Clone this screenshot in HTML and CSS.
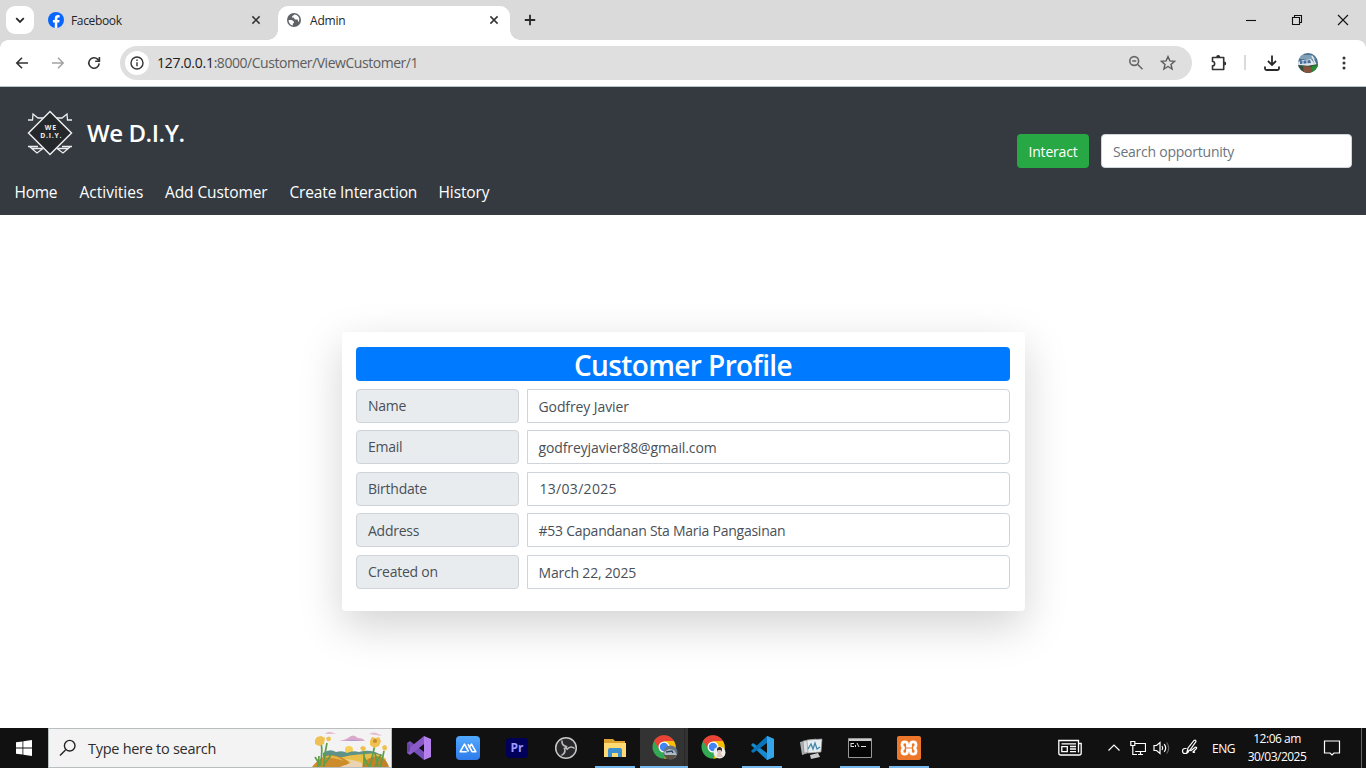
FILE: index.html
```html
<!DOCTYPE html>
<html lang="en">
<head>
<meta charset="utf-8">
<title>Admin</title>
<link rel="stylesheet" href="styles.css">
</head>
<body>
<div class="screen">
  <header class="tabstrip">
    <button class="tab-search"><svg width="10" height="10" viewBox="0 0 10 10"><path d="M1.2 3.2 5 7l3.800-3.800" class="stroke2"/></svg></button>
    <div class="tab tab-idle">
      <svg width="16" height="16" viewBox="0 0 16 16"><circle cx="8" cy="8" r="8" fill="#0866ff"/><path d="M6.800 16v-5.400H4.900V8h1.900V6.700c0-2.600 1.200-3.700 3.500-3.700.5 0 1 .1 1.300.2v2.200h-.9c-1.100 0-1.400.5-1.400 1.500V8h2.300l-.4 2.600H9.300V16z" fill="#fff"/></svg>
      <span class="tab-title t-fb">Facebook</span>
      <svg class="tab-close" width="10" height="10" viewBox="0 0 10 10"><path d="M1.400 1.400l7.200 7.200M8.600 1.400L1.400 8.600" class="stroke-close"/></svg>
    </div>
    <div class="tab tab-active">
      <svg width="16" height="16" viewBox="0 0 16 16"><circle cx="8" cy="8" r="7" fill="#5f6368"/><path d="M2.500 8.200c2.200-.4 4 .1 5.200 1.200.6.700.2 1.700-.7 2-.4.700 0 1.300-.2 2.100-2.400-.5-4.200-2.700-4.300-5.300zM8.200 2.500c-.2 1.300-1.900.9-2.100 2.200-.1.900 1 1.200 1.700.7.700.7.200 1.600 1.200 2 1.200.4 2-.4 2.600.4.600.8.100 1.700 1.100 2.200 1.800-3.900-.4-7.200-4.500-7.500z" fill="#fff"/></svg>
      <span class="tab-title t-admin">Admin</span>
      <svg class="tab-close" width="10" height="10" viewBox="0 0 10 10"><path d="M1.400 1.400l7.200 7.200M8.600 1.400L1.400 8.600" class="stroke-close"/></svg>
    </div>
    <svg class="new-tab" width="12" height="12" viewBox="0 0 12 12"><path d="M6 .8v10.400M.8 6h10.400" class="stroke2"/></svg>
    <div class="window-buttons">
      <svg width="12" height="12" viewBox="0 0 12 12"><path d="M1 6.500h10" class="stroke1"/></svg>
      <svg width="12" height="12" viewBox="0 0 12 12"><path d="M1.500 3.500h7v7h-7zM3.500 3.500v-2h7v7h-2" class="stroke1"/></svg>
      <svg width="12" height="12" viewBox="0 0 12 12"><path d="M1 1l10 10M11 1L1 11" class="stroke1"/></svg>
    </div>
  </header>

  <div class="toolbar">
    <svg width="16" height="16" viewBox="0 0 16 16"><path d="M14 8H3.200M8 2.800L2.800 8 8 13.200" class="stroke-nav"/></svg>
    <svg class="nav-forward" width="16" height="16" viewBox="0 0 16 16"><path d="M2 8h10.800M8 2.800L13.200 8 8 13.200"/></svg>
    <svg class="nav-reload" width="16" height="16" viewBox="0 0 16 16"><path d="M13.200 8.400A5.200 5.200 0 1 1 11.600 4.200L13.500 6" class="stroke-nav"/><path d="M13.400 2V6.300H9.200" class="stroke-nav"/></svg>
    <div class="omnibox">
      <span class="site-info"><svg width="14" height="14" viewBox="0 0 14 14"><circle cx="7" cy="7" r="6" fill="none" stroke="#333" stroke-width="1.400"/><path d="M7 6.200v4M7 3.600v1.400" stroke="#333" stroke-width="1.400"/></svg></span>
      <span class="url"><b>127.0.0.1</b>:8000/Customer/ViewCustomer/1</span>
      <svg class="zoom-icon" width="16" height="16" viewBox="0 0 16 16"><g fill="none" stroke="#666" stroke-width="1.600"><circle cx="6.200" cy="6" r="4.400"/><path d="M9.500 9.300l5 5M4.200 6h4"/></g></svg>
      <svg class="star-icon" width="16" height="16" viewBox="0 0 16 16"><path d="M8 1.600l1.900 4.300 4.700.4-3.600 3.100 1.100 4.600L8 11.500 3.900 14 5 9.400 1.400 6.300l4.700-.4z" fill="none" stroke="#5c5c5c" stroke-width="1.400"/></svg>
    </div>
    <svg class="ext-icon" width="18" height="18" viewBox="0 0 18 18"><path d="M2.500 3.500H13.700V15.500H2.500v-3.700a2.100 2.100 0 0 0 0-4.300z" class="stroke-nav" stroke-linejoin="round"/><path d="M6.200 3a2 2 0 0 1 4 0zM14.200 7.500a2 2 0 0 1 0 4z" fill="#292929"/></svg>
    <span class="divider"></span>
    <svg class="dl-icon" width="18" height="18" viewBox="0 0 18 18"><path d="M9 1.500v9M5 7l4 4 4-4M2 12.500v2q0 1.500 1.500 1.500h11q1.500 0 1.500-1.500v-2" class="stroke2"/></svg>
    <svg class="avatar" width="20" height="20" viewBox="0 0 20 20"><defs><clipPath id="av"><circle cx="10" cy="10" r="10"/></clipPath></defs><g clip-path="url(#av)"><path fill="#4b6f92" d="M0 0h20v20H0z"/><path fill="#7fa1b8" d="M3 2h11l4 4H1z"/><path fill="#dfe5ea" d="M0 9l5-2 8-1 5 6-6 1-12-1z"/><path d="M2 8l10-1 1 3-11 1z" fill="#466f9f"/><path d="M5 7v4m4-4v4" stroke="#dbe4ec"/><path d="M14 3l4 9" stroke="#e6ebee" stroke-width="1.500"/><path fill="#36503a" d="M0 12l9 1 11-2v9H0z"/><path fill="#86513d" d="M5 13l9 1-1 6H6z"/><path fill="#288c36" d="M14 13l6-1v8h-7z"/></g></svg>
    <svg class="menu-icon" width="4" height="14" viewBox="0 0 4 14" fill="#333"><circle cx="2" cy="2" r="1.500"/><circle cx="2" cy="7" r="1.500"/><circle cx="2" cy="12" r="1.500"/></svg>
  </div>

  <nav class="site-nav">
    <div class="nav-main">
      <svg class="logo" width="46" height="48" viewBox="0 0 46 48"><g fill="none" stroke="#eceeef" stroke-width="1.300"><path d="M1 10h4.500L6 4l5 4h7M45 10h-4.500L40 4l-5 4h-7M1 36.500h10M45 36.500H35M3 37l7 6 8-6M5 38.500h10M43 37l-7 6-8-6M41 38.500H31"/><path fill="#25282b" stroke-width="1.500" d="M23 1.500l21.500 21.500L23 44.500 1.500 23z"/></g><text x="23.800" y="20" class="logo-text">WE</text><text x="24.300" y="28" class="logo-text">D.I.Y.</text></svg>
      <span class="brand">We D.I.Y.</span>
      <button class="interact">Interact</button>
      <div class="search-input"><span>Search opportunity</span></div>
    </div>
    <div class="links">
      <a class="l1">Home</a><a class="l2">Activities</a><a class="l3">Add Customer</a><a class="l4">Create Interaction</a><a class="l5">History</a>
    </div>
  </nav>

  <main class="content">
    <section class="card">
      <h1><span>Customer Profile</span></h1>
      <div class="row"><div class="label">Name</div><div class="field f-name">Godfrey Javier</div></div>
      <div class="row"><div class="label">Email</div><div class="field f-mail">godfreyjavier88@gmail.com</div></div>
      <div class="row"><div class="label">Birthdate</div><div class="field f-date">13/03/2025</div></div>
      <div class="row"><div class="label low">Address</div><div class="field f-addr">#53 Capandanan Sta Maria Pangasinan</div></div>
      <div class="row"><div class="label">Created on</div><div class="field f-created">March 22, 2025</div></div>
    </section>
  </main>

  <footer class="taskbar">
    <div class="start"><svg width="16" height="16" viewBox="0 0 16 16" fill="#fff"><path d="M0 2.300L6.500 1.400v6.200H0zM7.300 1.300L16 0v7.600H7.300zM0 8.400h6.500v6.200L0 13.700zM7.300 8.400H16V16l-8.700-1.300z"/></svg></div>
    <div class="task-search">
      <svg width="18" height="18" viewBox="0 0 18 18"><path d="M6.500 11L1 16.500" class="stroke-search"/><circle cx="10.700" cy="6.700" r="5.300" class="stroke-search"/></svg>
      <span class="task-text">Type here to search</span>
      <svg class="scene" width="80" height="38" viewBox="0 0 80 38">
        <path d="M14 5q3-3 6-2l5 2zM58 5q5-4 13 2z" fill="#e5bdcf"/><path d="M28 12q6-1 9-3 5-5 10 0 5 0 7 3z" fill="#dba9c9"/><path d="M34 12q6-3 17 0z" fill="#b79dd3"/>
        <circle cx="38" cy="21" r="4" fill="#f7cf55"/><path d="M12 24q7-5 13-1 7-2 11 1 6-3 12-1 12-4 24 4v11H12z" fill="#5e9188"/><path d="M20 31q20-6 35-6 12-2 20 5v8H20z" fill="#eabf48"/><path d="M1 38q9-12 20-12 15 2 20 12z" fill="#cc8c2c"/><path d="M13 28q10-4 20 4-8-3-20-4z" fill="#e8b749"/><path d="M50 38q4-9 16-11 9 1 12 11z" fill="#c48228"/><path d="M29 38c12-4 14-5 5-8 16 2 19 4 17 8z" fill="#ead3b3"/>
        <path d="M9 37q3-14 1-23m3 24q0-12 3-24m-7 22L4 28m8 9l8-11M59 38q3-13 5-23m-6 23l-5-10m11 10l6-13m-1 13q3-10 4-16M67 38l-3-14M53 37V22M7 38l1-11" fill="none" stroke="#5f9d49" stroke-width="1.700"/>
        <path d="M4 11l2-3 4-1 4 2-1 6-5 2-4-2zM15 9q3-3 5 0 0 4-4 3zM59 12l2-4 4 1 3-1 2 4-2 5-5 2-4-3zM49 19q3-4 6 0-1 4-4 3zM71 18q3-4 5 0 0 5-4 3z" fill="#efc052"/><circle cx="64" cy="12" r="2" fill="#c78b2d"/>
      </svg>
    </div>
    <div class="apps">
      <div class="app"><svg width="24" height="24" viewBox="0 0 24 24"><path d="M0 7l3-2 14 11V24L1 11z" fill="#7650b8"/><path d="M0 17l3 2L17 8V0L1 13z" fill="#8a5ac8"/><path d="M17 0l7 3v18l-7 3z" fill="#b681ed"/><path d="M0 7v10l3-2V9z" fill="#66439e"/></svg></div>
      <div class="app"><svg width="24" height="24" viewBox="0 0 24 24"><defs><linearGradient id="mb" x2="0" y2="1"><stop stop-color="#51a9ff"/><stop offset="1" stop-color="#2f7bea"/></linearGradient></defs><rect width="24" height="24" rx="4" fill="url(#mb)"/><path d="M10.800 15.700H4.200L8.500 8.200l4 7.500M12 8.200l4 7.500h3.800L15.500 8.200l-2.500 4" fill="none" stroke="#fff" stroke-width="1.600" stroke-linejoin="round"/></svg></div>
      <div class="app"><span class="premiere">Pr</span></div>
      <div class="app"><svg width="24" height="24" viewBox="0 0 24 24"><circle cx="12" cy="12" r="10.300" fill="#29292c" stroke="#c8c8c8" stroke-width="1.500"/><path id="blade" d="M8 4.500C7.500 8.500 10 10 12.500 10.500L12 12.500" fill="none" stroke="#bcbdbf" stroke-width="1.600"/><use href="#blade" transform="rotate(120 12 12)"/><use href="#blade" transform="rotate(240 12 12)"/></svg></div>
      <div class="app running"><svg width="24" height="24" viewBox="0 0 24 24"><path d="M1 3h9l2 2h10v16H1z" fill="#dda331"/><path d="M1 7h22v14H1z" fill="#ffda73"/><path d="M5 21v-7q0-2 2-2h10q2 0 2 2v7h-4v-4H9v4z" fill="#3b90d0"/></svg></div>
      <div class="app running active"><svg class="chrome" width="26" height="26" viewBox="0 0 26 26"><circle cx="12" cy="12" r="11.500" fill="#34a853"/><path d="M2 6a11.500 11.500 0 0 1 20 0H12L8 15z" fill="#ea4335"/><path d="M12 6h10a11.500 11.500 0 0 1-10 17.500L18 15z" fill="#fbbc04"/><circle cx="12" cy="12" r="5.500" fill="#fff"/><circle cx="12" cy="12" r="4.200" fill="#4285f4"/><circle cx="18.500" cy="17.500" r="7" fill="#647485"/><path d="M12 17l5-3 5 1 3 5H13z" fill="#aebac6"/><path d="M12 20h12l-3 4h-6z" fill="#5c5043"/><path d="M14 17l6-1 1 2" fill="none" stroke="#2e465c" stroke-width="1.500"/></svg></div>
      <div class="app"><svg class="chrome" width="26" height="26" viewBox="0 0 26 26"><circle cx="12" cy="12" r="11.500" fill="#34a853"/><path d="M2 6a11.500 11.500 0 0 1 20 0H12L8 15z" fill="#ea4335"/><path d="M12 6h10a11.500 11.500 0 0 1-10 17.500L18 15z" fill="#fbbc04"/><circle cx="12" cy="12" r="5.500" fill="#fff"/><circle cx="12" cy="12" r="4.200" fill="#4285f4"/><circle cx="18.500" cy="17.500" r="6" fill="#eee"/><circle cx="18.500" cy="14.500" r="2.500" fill="#332b28"/><path d="M17 15h3v3l2 4h-6z" fill="#dac5bb"/></svg></div>
      <div class="app running"><svg width="24" height="24" viewBox="0 0 24 24"><path d="M17 0l7 3v18l-7 3L1 9l2-2 14 10z" fill="#178bd0"/><path d="M1 15l2 2L17 7V0z" fill="#0875bb"/><path d="M17 0l7 3v18l-7 3z" fill="#35a5eb"/></svg></div>
      <div class="app"><svg width="24" height="24" viewBox="0 0 24 24"><path d="M1 6l8-2v13l-6 2z" fill="#a9afb2"/><path d="M4 5l13-2v13L5 17z" fill="#d9dddf" stroke="#888" stroke-width=".7"/><path d="M8 4l15-1-1 13-13 1z" fill="#e8edf0" stroke="#999" stroke-width=".7"/><path d="M9 13l3-5 2 5 2-6 2 6 3-2" fill="none" stroke="#4387ac" stroke-width="1.300"/><path d="M11 19l8-2 2 4-9 2z" fill="#c8cbcd"/></svg></div>
      <div class="app running"><svg width="24" height="22" viewBox="0 0 24 22"><path d="M.5 1.500h23v19H.5z" fill="#050505" stroke="#989898"/><path d="M1 2h22v2H1z" fill="#ccc"/><path d="M3 6.500h3M3 6v4M3 9.500h3M7.500 8v2M9 6l2 4M13 9.500h5" stroke="#ddd"/></svg></div>
      <div class="app running"><svg width="24" height="24" viewBox="0 0 24 24"><rect width="24" height="24" rx="2" fill="#ed762b"/><path d="M7.500 12C5.300 11.500 5 10.300 5 8.700 5 6.800 6 5.800 7.800 5.800S10.500 7 10.500 8.500V10h3V8.500c0-1.500.9-2.700 2.700-2.700S19 6.800 19 8.700s-.5 2.800-2.500 3.300c2 .5 2.500 1.700 2.500 3.300 0 1.900-1 2.900-2.800 2.900s-2.700-1.200-2.700-2.700V14h-3v1.500c0 1.500-.9 2.700-2.700 2.700S5 17.200 5 15.300s.5-2.800 2.500-3.300z" fill="none" stroke="#fff" stroke-width="2.800"/></svg></div>
    </div>
    <div class="tray">
      <svg class="news" width="24" height="18" viewBox="0 0 24 18"><g fill="none" stroke="#fff" stroke-width="1.300"><path d="M20.500 13.500V1.500H.8V14q0 2 2 2h18.400q2 0 2-2V4.500h-2.700v9"/><path d="M3.500 4.800h14.500M3.800 7.600h5.500v5H3.800zM12 7.500h6M12 10h6M12 12.600h6"/></g></svg>
      <svg class="chev" width="14" height="14" viewBox="0 0 14 14"><path d="M1.500 9.500L7 4l5.500 5.500" class="tray-line"/></svg>
      <svg class="net" width="16" height="16" viewBox="0 0 16 16"><path d="M5 3.500h10.500v8H5.200M8 14.500h5M10.500 11.500v3M.8 1.500h4v4h-4zM2.800 5.500v9H7" class="tray-line"/></svg>
      <svg class="sound" width="18" height="16" viewBox="0 0 18 16"><path d="M1 5.500h2.500L7 2.500v11l-3.500-3H1zM9 6q1.500 2 0 4M11.200 4.200q3 3.800 0 7.600" class="tray-line"/><path d="M13.700 2.500q4 5.500 0 11" class="tray-line dim"/></svg>
      <svg class="pen" width="18" height="18" viewBox="0 0 18 18"><path d="M6 13l1-4 6-7.500q2-1 2 1L9 11zM5.500 9.500H4q-2.500 0-2.500 2.500T4 14.500q3 0 4-3M9.500 12l5-4q1.500 0 1 1.500L12 13q0 1 2 0" class="tray-line"/></svg>
      <span class="lang">ENG</span>
      <div class="clock"><span class="time">12:06 am</span><span class="date">30/03/2025</span></div>
      <svg class="notif" width="18" height="18" viewBox="0 0 18 18"><path d="M1.500 2h15v12H11l-2 2-2-2H1.500z" class="tray-line"/></svg>
      <span class="show-desktop"></span>
    </div>
  </footer>
</div>
</body>
</html>
```
FILE: styles.css
```css
* { box-sizing: border-box; }
body { margin: 0; font-family: "Open Sans", "Noto Sans", sans-serif; color: #212529; }
svg { display: block; flex: none; }
button { border: 0; padding: 0; font: inherit; }
span, a, b { white-space: nowrap; }
.screen { width: 1366px; height: 768px; display: flex; flex-direction: column; overflow: hidden; background: #fff; }
.stroke2 { fill: none; stroke: #292929; stroke-width: 1.8; }
.stroke-nav { fill: none; stroke: #333; stroke-width: 1.600; }
.stroke-close { fill: none; stroke: #333; stroke-width: 1.500; }
.stroke1 { fill: none; stroke: #111; stroke-width: 1.1; }

.tabstrip { height: 40px; flex: none; background: #dadada; display: flex; align-items: center; padding-left: 6px; }
.tab-search { width: 28px; height: 28px; border-radius: 9px; background: #fff; display: flex; align-items: center; justify-content: center; }
.tab { display: flex; align-items: center; font-size: 12px; }
.tab-title { margin-left: 7px; padding-top: 2px; line-height: 16px; }
.t-fb { letter-spacing: -.35px; }
.t-admin { margin-left: 8px; letter-spacing: -.2px; }
.tab-close { margin-left: auto; }
.tab-idle { width: 213px; margin-left: 14px; }
.tab-active { position: relative; width: 232px; height: 34px; align-self: flex-end; margin-left: 17px; padding: 0 11px 6px 8px; border-radius: 10px 10px 0 0; background: #fff; }
.tab-active::before, .tab-active::after { content: ""; position: absolute; bottom: 0; width: 10px; height: 10px; }
.tab-active::before { left: -10px; background: radial-gradient(circle at 0 0, transparent 9.500px, #fff 10px); }
.tab-active::after { right: -10px; background: radial-gradient(circle at 100% 0, transparent 9.500px, #fff 10px); }
.new-tab { margin-left: 14px; }
.window-buttons { margin-left: auto; display: flex; gap: 34px; padding-right: 17px; }

.toolbar { height: 47px; flex: none; display: flex; align-items: center; padding: 0 20px 1px 14px; background: radial-gradient(circle at 8px 8px, #fff 7.500px, #dadada 8px) 0 0 / 8px 8px no-repeat, radial-gradient(circle at 0 8px, #fff 7.500px, #dadada 8px) 100% 0 / 8px 8px no-repeat, #fff; border-bottom: 1px solid #b9c2c4; }
.nav-forward { margin-left: 20px; fill: none; stroke: #a2a2a2; stroke-width: 1.500; }
.nav-reload { margin-left: 20px; }
.omnibox { width: 1072px; height: 34px; margin-left: 18px; padding: 0 16px 0 5px; display: flex; align-items: center; border-radius: 17px; background: #dfdfdf; }
.site-info { width: 24px; height: 24px; border-radius: 50%; background: #fff; display: flex; align-items: center; justify-content: center; }
.url { margin-left: 8px; font-size: 14px; letter-spacing: -.46px; color: #5d5d5d; }
.url b { font-weight: 400; letter-spacing: -.27px; color: #202020; }
.zoom-icon { margin-left: auto; }
.star-icon { margin-left: 16px; }
.ext-icon { margin-left: 18px; }
.divider { width: 2px; height: 15px; margin-left: 16px; background: #dadada; }
.dl-icon { margin-left: 17px; }
.avatar { margin-left: 17px; }
.menu-icon { margin-left: 24px; }

.site-nav { height: 128px; flex: none; background: #343a40; color: #fff; display: flex; flex-direction: column; }
.nav-main { height: 92px; display: flex; align-items: center; padding: 0 14px 0 27px; }
.logo { margin-top: 2px; }
.logo-text { font: 700 6.800px "Open Sans", sans-serif; letter-spacing: .8px; text-anchor: middle; fill: #eee; }
.brand { margin-left: 14px; padding-bottom: 2px; font-size: 24px; font-weight: 600; letter-spacing: -.45px; }
.interact { width: 72px; height: 34px; margin: 36px 12px 0 auto; border-radius: 4px; background: #28a745; color: #fff; font-size: 14px; letter-spacing: -.2px; align-self: center; }
.search-input { width: 251px; height: 34px; margin-top: 36px; padding: 0 11px; border: 1px solid #ced4da; border-radius: 4px; background: #fff; color: #6c757d; font-size: 14px; letter-spacing: -.24px; line-height: 34px; }
.links { display: flex; padding-left: 14.500px; font-size: 15.500px; line-height: 26px; letter-spacing: -.1px; }
.links a { flex: none; }
.l1 { width: 65px; letter-spacing: -.3px; } .l2 { width: 85.500px; letter-spacing: 0; } .l3 { width: 124.500px; } .l4 { width: 149px; letter-spacing: -.15px; }

.content { flex: 1; display: flex; justify-content: center; align-items: flex-start; padding: 117px 0 0 1px; }
.card { width: 683px; height: 279px; padding: 15px 15px 14px 14px; border-radius: 4px; background: #fff; box-shadow: 0 14.400px 43.200px rgba(0,0,0,.175); display: flex; flex-direction: column; gap: 7.300px; }
h1 { height: 34.300px; flex: none; margin: 0; border-radius: 4px; background: #007bff; color: #fff; text-align: center; font-size: 28px; font-weight: 600; line-height: 37px; letter-spacing: -.6px; }
.row { height: 34.200px; flex: none; display: flex; gap: 8px; font-size: 14px; color: #495057; }
.label, .field { border: 1px solid #ced4da; border-radius: 4px; padding: 0 11px; white-space: nowrap; line-height: 32px; }
.label { width: 163px; background: #e9ecef; letter-spacing: -.25px; }
.low { line-height: 34px; }
.field { flex: 1; border-radius: 0 4px 4px 0; padding-left: 10.500px; line-height: 34px; }
.f-name { letter-spacing: -.1px; }
.f-mail { letter-spacing: -.12px; }
.f-date { padding-left: 11.500px; letter-spacing: .3px; line-height: 32px; }
.f-addr { letter-spacing: -.25px; }
.f-created { letter-spacing: -.2px; }

.taskbar { height: 40px; flex: none; display: flex; background: #111; color: #fff; }
.start { width: 48px; display: flex; align-items: center; justify-content: center; }
.task-search { width: 344px; display: flex; align-items: center; padding-left: 10px; border: 1px solid #b9bec0; background: #f3f3f3; color: #2d2d2d; font-size: 14.500px; }
.stroke-search { fill: none; stroke: #222; stroke-width: 1.400; }
.task-text { margin-left: 11px; letter-spacing: -.28px; }
.scene { margin-left: auto; }
.apps { display: flex; padding-left: 2.400px; }
.app { position: relative; width: 49px; display: flex; align-items: center; justify-content: center; }
.chrome { margin-left: 2px; }
.running::after { content: ""; position: absolute; left: 5px; right: 4px; bottom: 0; height: 2px; background: #76b9ed; }
.active { background: linear-gradient(90deg, transparent 1px, #333 1px, #333 45px, #282828 45px, #282828 46px, #333 46px); }
.active::after { left: 1px; right: 0; }
.premiere { width: 22px; height: 20px; border-radius: 4px; background: #00005b; color: #9999ff; font-size: 12px; line-height: 19px; font-weight: 700; text-align: center; }
.tray { margin-left: auto; display: flex; align-items: center; }
.tray-line { fill: none; stroke: #fff; stroke-width: 1.200; }
.dim { stroke: #666; }
.chev { margin-left: 25px; }
.net { margin-left: 9px; }
.sound { margin-left: 7px; }
.pen { margin-left: 10px; }
.lang { width: 24px; margin-left: 13px; font-size: 12px; letter-spacing: -.5px; }
.clock { width: 62px; margin-left: 10px; display: flex; flex-direction: column; align-items: center; font-size: 12px; line-height: 18px; padding-bottom: 1px; letter-spacing: -.5px; }
.notif { margin-left: 15px; }
.show-desktop { width: 1px; height: 40px; margin: 0 4px 0 20px; background: #666; }
```
